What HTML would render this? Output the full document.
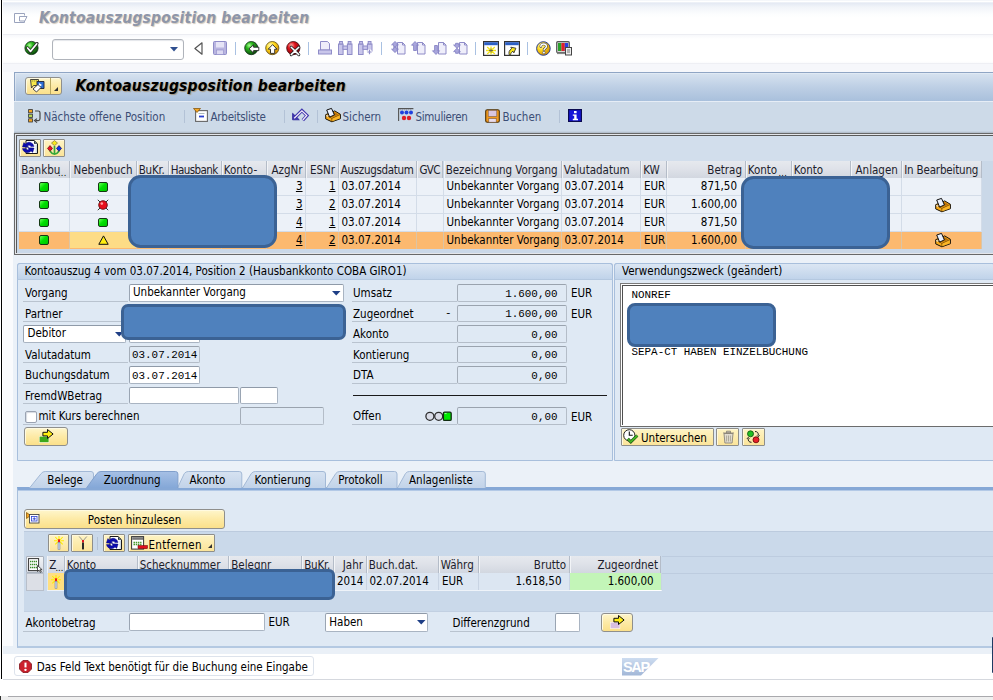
<!DOCTYPE html><html lang="de"><head><meta charset="utf-8"><title>Kontoauszugsposition bearbeiten</title><style>
html,body{margin:0;padding:0}
body{width:993px;height:700px;position:relative;overflow:hidden;background:#fff;font-family:"DejaVu Sans Condensed","Liberation Sans",sans-serif;font-size:11.5px;color:#000}
div{position:absolute;box-sizing:border-box;white-space:nowrap}
svg{position:absolute;overflow:visible}
.t{line-height:14px;height:14px;margin-top:-.7px}
.m{font-family:"Liberation Mono",monospace;font-size:10.9px;line-height:14px}
.fld .m,.ro .m{position:relative;top:.5px}
.fld{background:#fff;border:1px solid #a9b4c2;border-top-color:#8f9aa8;border-left-color:#9aa5b3;border-radius:2px}
.ro{background:#dfe9f4;border:1px solid #b4bdc8;border-top-color:#9aa3ae;border-left-color:#a4adb8;border-radius:2px}
.lbl{border-bottom:1px solid #b9c3cf}
.btn{background:linear-gradient(#fef6cc,#fdeaa6 50%,#fbe08a);border:1px solid #8f8f8c;border-radius:3px;box-shadow:inset 1px 1px 0 #fffae0}
.btn2{background:linear-gradient(#fef4c4,#fbe49a);border:1px solid #8e8e8a;border-radius:1px;box-shadow:inset 1px 1px 0 #fff8dc}
.blue{background:#4f81bd;border:3px solid #3b6294;border-radius:12.5px}
.hd{background:linear-gradient(#eef0f4,#d8dce4);border-right:1px solid #f8f9fb;border-left:1px solid #c2c8d2;top:0}
.c{top:0;height:100%}
.u{text-decoration:underline}
</style></head><body>
<div style="left:0px;top:0px;width:993px;height:700px;background:#fff"></div>
<div style="left:3px;top:0px;width:990px;height:35px;background:linear-gradient(#f0f3f8 0,#fff 1.500px,#e4e9f3 3px,#f1f4f9 7px,#fcfdfe 14px,#fff 18px,#fff 33px)"></div>
<div style="left:3px;top:34px;width:990px;height:1.5px;background:#ecedf2"></div>
<div style="left:3px;top:35px;width:990px;height:28px;background:linear-gradient(#f7f8fb,#fff 4px,#fff 26px,#fafbfd)"></div>
<div style="left:3px;top:63px;width:990px;height:9px;background:linear-gradient(#eeeff4 0,#eeeff4 1.500px,#f6f7fb 1.500px)"></div>
<div style="left:3px;top:72px;width:11px;height:607px;background:#fafbfd"></div>
<div style="left:14px;top:72px;width:979px;height:582px;background:#dfe9f4"></div>
<div style="left:14px;top:72px;width:979px;height:29px;background:linear-gradient(#8fa5c4 0,#8fa5c4 1px,#e0e9f4 1px,#e0e9f4 2px,#d5e1ef 2px,#bccee4 55%,#a9c0dc 100%);border-left:1px solid #8fa5c4"></div>
<div style="left:15px;top:74px;width:1px;height:27px;background:rgba(255,255,255,.35)"></div>
<div style="left:14px;top:101px;width:979px;height:32px;background:linear-gradient(#e6edf6 0,#e6edf6 1px,#cddae8 1px,#cddae8 30px,#b4bfcc 31.500px,#9aa3ad 32px)"></div>
<div style="left:1px;top:0px;width:1px;height:679px;background:#000"></div>
<div style="left:3px;top:654px;width:990px;height:25px;background:#fff"></div>
<div style="left:3px;top:646px;width:990px;height:8px;background:#eaf0f7"></div>
<div style="left:3px;top:679px;width:990px;height:1px;background:#d5d8de"></div>
<div style="left:0px;top:696px;width:993px;height:4px;background:#efefef"></div>
<div style="left:8px;top:696px;width:985px;height:1px;background:#a9a9ad"></div>
<div style="left:0px;top:696px;width:1px;height:4px;background:#333"></div>
<div style="left:991.5px;top:637px;width:1.5px;height:36px;background:#1f3b63;border-radius:2px 0 0 2px;z-index:5"></div>
<div class="t" style="left:39px;top:8.5px;font-size:15.5px;font-weight:bold;font-style:italic;color:#8e96a9;letter-spacing:.2px;line-height:20px;height:20px;text-shadow:1px 1px 1px #d2c8bc">Kontoauszugsposition bearbeiten</div>
<svg style="left:14px;top:13px" width="14" height="11" viewBox="0 0 14 11"><path d="M10.5 2.5V.5H.5v9h10V8" fill="none" stroke="#9aa3bd" stroke-width="1"/><path d="M5.5 3.5h7.5l-2.2 4.5H5.5z" fill="#fff" stroke="#9aa3bd" stroke-width="1"/></svg>
<div style="left:52px;top:39px;width:132px;height:21px;background:#fff;border:1px solid #b0b4bb;border-radius:3px;box-shadow:inset 0 1px 1px #e4e6ea"></div>
<svg style="left:170px;top:47px" width="8" height="5"><path d="M0 0h8L4 4.5z" fill="#2f4f8f"/></svg>
<svg width="0" height="0" style="left:0;top:0"><defs>
<radialGradient id="gG" cx=".35" cy=".3" r=".8"><stop offset="0" stop-color="#b0ff9a"/><stop offset=".3" stop-color="#2cb81e"/><stop offset="1" stop-color="#063a08"/></radialGradient>
<radialGradient id="gY" cx=".35" cy=".3" r=".8"><stop offset="0" stop-color="#fffbc0"/><stop offset=".4" stop-color="#ffd91a"/><stop offset="1" stop-color="#c77a00"/></radialGradient>
<radialGradient id="gR" cx=".35" cy=".3" r=".8"><stop offset="0" stop-color="#ffb0a8"/><stop offset=".35" stop-color="#e0141c"/><stop offset="1" stop-color="#6b0008"/></radialGradient>
</defs></svg>
<svg style="left:24px;top:41px" width="16" height="15" viewBox="0 0 16 15"><circle cx="7.5" cy="7" r="6.600" fill="url(#gG)" stroke="#0b2a10" stroke-width=".8"/><path d="M3.5 7l3 3.6L13 2.6" fill="none" stroke="#222" stroke-width="3.2" stroke-linecap="round" stroke-linejoin="round"/><path d="M3.6 7l2.9 3.4L12.8 2.8" fill="none" stroke="#fff" stroke-width="1.7" stroke-linecap="round" stroke-linejoin="round"/></svg>
<svg style="left:194px;top:42px" width="9" height="13" viewBox="0 0 9 13"><path d="M8 .8v11.4L.9 6.5z" fill="#fff" stroke="#555" stroke-width="1.2" stroke-linejoin="round"/></svg>
<svg style="left:213px;top:41px" width="14" height="14" viewBox="0 0 14 14"><rect x=".5" y=".5" width="13" height="13" rx="1" fill="#b9b5e0" stroke="#8f8cc8"/><rect x="3" y="1" width="8" height="5.5" fill="#e6e4f6"/><rect x="3.5" y="9" width="7" height="4.5" fill="#dcd9f2" stroke="#8f8cc8" stroke-width=".6"/></svg>
<div style="left:235px;top:42px;width:1px;height:13px;background:#a9c1e2"></div>
<svg style="left:244px;top:41px" width="16" height="15" viewBox="0 0 16 15"><circle cx="7.3" cy="7.100" r="6.600" fill="url(#gG)" stroke="#0b2a10" stroke-width=".8"/><path d="M5 7.8l4.6-4v2.4h5.2v3.4H9.6v2.4z" fill="#fff" stroke="#222" stroke-width=".9" stroke-linejoin="round"/></svg>
<svg style="left:265px;top:41px" width="16" height="15" viewBox="0 0 16 15"><circle cx="7.3" cy="7.100" r="6.600" fill="url(#gY)" stroke="#5a4a10" stroke-width=".8"/><path d="M7.6 3.6l4.4 4.6h-2.3v4.2H5.5V8.2H3.2z" fill="#fff" stroke="#222" stroke-width=".9" stroke-linejoin="round"/></svg>
<svg style="left:286px;top:41px" width="16" height="15" viewBox="0 0 16 15"><circle cx="7.3" cy="7.100" r="6.600" fill="url(#gR)" stroke="#3a0508" stroke-width=".8"/><path d="M5.2 6.2l7.6 7.4M12.8 6.2l-7.6 7.4" stroke="#222" stroke-width="3" stroke-linecap="round"/><path d="M5.2 6.2l7.6 7.4M12.8 6.2l-7.6 7.4" stroke="#fff" stroke-width="1.5" stroke-linecap="round"/></svg>
<div style="left:308px;top:42px;width:1px;height:13px;background:#a9c1e2"></div>
<svg style="left:318px;top:41px" width="14" height="14" viewBox="0 0 14 14"><path d="M2.5.5h7l2 2.2V9h-9z" fill="#efeefa" stroke="#8f8cc8"/><rect x=".5" y="9" width="13" height="4" fill="#c9c6ea" stroke="#8f8cc8"/></svg>
<svg style="left:338px;top:41px" width="15" height="14" viewBox="0 0 15 14"><rect x=".5" y="3" width="4.6" height="10.5" fill="#c9c6ea" stroke="#8f8cc8"/><rect x="9.4" y="3" width="4.6" height="10.5" fill="#c9c6ea" stroke="#8f8cc8"/><rect x="1.6" y=".5" width="2.8" height="2.5" fill="#c9c6ea" stroke="#8f8cc8"/><rect x="10.2" y=".5" width="2.8" height="2.5" fill="#c9c6ea" stroke="#8f8cc8"/><rect x="5" y="5" width="4.4" height="3.4" fill="#c9c6ea" stroke="#8f8cc8"/></svg>
<svg style="left:358px;top:41px" width="16" height="14" viewBox="0 0 16 14"><rect x=".5" y="3" width="4.6" height="10.5" fill="#c9c6ea" stroke="#8f8cc8"/><rect x="9.4" y="3" width="4.6" height="7" fill="#c9c6ea" stroke="#8f8cc8"/><rect x="1.6" y=".5" width="2.8" height="2.5" fill="#c9c6ea" stroke="#8f8cc8"/><rect x="10.2" y=".5" width="2.8" height="2.5" fill="#c9c6ea" stroke="#8f8cc8"/><rect x="5" y="5" width="4.4" height="3.4" fill="#c9c6ea" stroke="#8f8cc8"/><path d="M11.5 8.5v5M9 11h5" stroke="#fff" stroke-width="3.2"/><path d="M11.5 8.8v4.4M9.3 11h4.4" stroke="#8f8cc8" stroke-width="1.2"/></svg>
<div style="left:381px;top:42px;width:1px;height:13px;background:#a9c1e2"></div>
<svg style="left:391px;top:41px" width="15" height="14" viewBox="0 0 15 14"><path d="M6.500 1.500h5l2.500 2.500v9h-7.500z" fill="#efeefa" stroke="#8f8cc8"/><path d="M11.500 1.500v2.500h2.500" fill="none" stroke="#8f8cc8"/><path d="M4 .5L.6 3.800h2v1.700h2.800V3.800h2zM4 11.500L.6 8.200h2V6.500h2.800v1.700h2z" fill="#a9a6dc" stroke="#7f7cc2" stroke-width=".8"/></svg>
<svg style="left:411px;top:41px" width="15" height="14" viewBox="0 0 15 14"><path d="M6.500 1.500h5l2.500 2.500v9h-7.500z" fill="#efeefa" stroke="#8f8cc8"/><path d="M11.500 1.500v2.500h2.500" fill="none" stroke="#8f8cc8"/><path d="M4 .5L.5 4.200h2.100v5.300h2.800V4.200h2.100z" fill="#a9a6dc" stroke="#7f7cc2" stroke-width=".8"/></svg>
<svg style="left:432px;top:41px" width="15" height="14" viewBox="0 0 15 14"><path d="M6.500 1.500h5l2.500 2.500v9h-7.500z" fill="#efeefa" stroke="#8f8cc8"/><path d="M11.500 1.500v2.500h2.500" fill="none" stroke="#8f8cc8"/><path d="M4 13.500L.5 9.800h2.100V4.500h2.800v5.300h2.100z" fill="#a9a6dc" stroke="#7f7cc2" stroke-width=".8"/></svg>
<svg style="left:453px;top:41px" width="15" height="14" viewBox="0 0 15 14"><path d="M6.500 1.500h5l2.500 2.500v9h-7.500z" fill="#efeefa" stroke="#8f8cc8"/><path d="M11.500 1.500v2.500h2.500" fill="none" stroke="#8f8cc8"/><path d="M4 7.300L.6 4h2V2.300h2.800V4h2zM4 7.300L.6 10.600h2v1.700h2.800v-1.700h2z" fill="#a9a6dc" stroke="#7f7cc2" stroke-width=".8"/></svg>
<div style="left:475px;top:42px;width:1px;height:13px;background:#a9c1e2"></div>
<svg style="left:483px;top:41px" width="16" height="15" viewBox="0 0 16 15"><rect x=".6" y=".6" width="14.8" height="13.8" fill="#fff" stroke="#333" stroke-width="1.2"/><rect x="1.2" y="1.2" width="13.6" height="3" fill="#2c5fc4"/><path d="M8 5.5v8M3 9.5h10M4.2 6l7.6 7M11.8 6l-7.6 7" stroke="#f2e21a" stroke-width="1.3"/><path d="M8 7.5v4M6 9.5h4" stroke="#555" stroke-width=".8"/></svg>
<svg style="left:504px;top:41px" width="16" height="15" viewBox="0 0 16 15"><rect x=".6" y=".6" width="14.8" height="13.8" fill="#fff" stroke="#333" stroke-width="1.2"/><rect x="1.2" y="1.2" width="13.6" height="3" fill="#2c5fc4"/><path d="M3.5 12.5c.4-3 2-4.6 5-4.8V6l4 3.3-4 3.2v-1.9c-1.6 0-2.9.6-3.6 1.9z" fill="#f7e61c" stroke="#333" stroke-width=".8" stroke-linejoin="round" transform="rotate(-28 8 9.5)"/></svg>
<div style="left:527px;top:42px;width:1px;height:13px;background:#a9c1e2"></div>
<svg style="left:536px;top:41px" width="15" height="15" viewBox="0 0 15 15"><circle cx="7.4" cy="7.5" r="6.8" fill="url(#gY)" stroke="#2c3f90" stroke-width="1"/><path d="M4.8 5.6c0-1.6 1.2-2.6 2.8-2.6s2.8 1 2.8 2.4c0 1.8-2.4 1.8-2.4 3.6" fill="none" stroke="#444" stroke-width="2.6" stroke-linecap="round"/><path d="M4.8 5.6c0-1.6 1.2-2.6 2.8-2.6s2.8 1 2.8 2.4c0 1.8-2.4 1.8-2.4 3.6" fill="none" stroke="#fff" stroke-width="1.4" stroke-linecap="round"/><circle cx="7.9" cy="11.6" r="1.3" fill="#fff" stroke="#444" stroke-width=".6"/></svg>
<svg style="left:556px;top:41px" width="17" height="15" viewBox="0 0 17 15"><rect x=".7" y=".7" width="12.6" height="11" rx="1" fill="#d8d8d8" stroke="#555" stroke-width="1.2"/><rect x="2" y="2" width="3.4" height="8" fill="#2aa02a"/><rect x="5.4" y="2" width="3.4" height="8" fill="#e0202a"/><rect x="8.8" y="2" width="3.4" height="8" fill="#2a40e0"/><rect x="1" y="11.5" width="12" height="1.6" fill="#888"/><rect x="9.5" y="6.5" width="6" height="7.5" fill="#eee" stroke="#444" stroke-width="1"/><path d="M11 9h3M11 11h3" stroke="#666" stroke-width=".9"/></svg>
<div class="btn" style="left:24.5px;top:77px;width:37px;height:17.5px;"></div>
<div style="left:50px;top:78px;width:1px;height:15.5px;background:#b9a860"></div>
<svg style="left:54px;top:87px" width="4" height="4" viewBox="0 0 4 4"><path d="M4 0v4H0z" fill="#333"/></svg>
<svg style="left:28px;top:78px" width="19" height="15" viewBox="0 0 19 15"><path d="M2.5 1.5h8v6h-5l-2 2.5z" fill="#f7e94a" stroke="#333" stroke-width=".9" stroke-linejoin="round"/><path d="M3.8 3h5.5" stroke="#555" stroke-width=".8" stroke-dasharray="1 1"/><path d="M9 3.5h7v7H9z" fill="#2f6fd6" stroke="#223" stroke-width=".9"/><path d="M11 5l3 2-3 2z" fill="#fff"/><path d="M5 11l5-4.5 3 3L8.500 14z" fill="#fff" stroke="#333" stroke-width=".9" stroke-linejoin="round"/></svg>
<div class="t" style="left:75.5px;top:76.5px;font-size:15.5px;font-weight:bold;font-style:italic;color:#000;letter-spacing:.2px;line-height:20px;height:20px;text-shadow:1px 1px 1px rgba(150,110,50,.55)">Kontoauszugsposition bearbeiten</div>
<svg style="left:27.5px;top:109px" width="13" height="14" viewBox="0 0 13 14"><rect x=".6" y=".6" width="3.8" height="3.2" fill="#f5a623" stroke="#333" stroke-width=".8"/><rect x=".6" y="5.2" width="3.8" height="3.2" fill="#b4d455" stroke="#333" stroke-width=".8"/><rect x=".6" y="9.8" width="3.8" height="3.2" fill="#f5a623" stroke="#333" stroke-width=".8"/><path d="M7 2h3.2q1.800 0 1.800 1.800v6q0 1.800-1.800 1.800H7.500" fill="none" stroke="#444" stroke-width="1.2"/><path d="M9 9.600L6.500 11.600 9 13.600" fill="none" stroke="#444" stroke-width="1.200"/></svg>
<div class="t" style="left:43.5px;top:110.3px;color:#3c4e76">Nächste offene Position</div>
<div style="left:184px;top:109.5px;width:1px;height:13px;background:#b3c2d6"></div>
<svg style="left:193px;top:108px" width="15" height="14" viewBox="0 0 15 14"><rect x="2.600" y="2.600" width="11.800" height="10.800" fill="#fff" stroke="#666" stroke-width="1.100"/><path d="M.5.500h7L4 4.500z" fill="#f5a623" stroke="#7a4a00" stroke-width=".7"/><path d="M6 8.500h5" stroke="#2a3fd0" stroke-width="1.800"/><path d="M5.500 5.500h6" stroke="#9aa" stroke-width=".8"/></svg>
<div class="t" style="left:210.5px;top:110.3px;color:#3c4e76;letter-spacing:-.25px">Arbeitsliste</div>
<div style="left:284px;top:109.5px;width:1px;height:13px;background:#b3c2d6"></div>
<svg style="left:291.5px;top:109px" width="17" height="13" viewBox="0 0 17 13"><path d="M3.500 8L9.900 1.600 15 6.500 10.800 11.200" fill="none" stroke="#4238ae" stroke-width="3.200" stroke-linejoin="miter"/><path d="M.6 4.300v6.500h6.700z" fill="#4238ae" stroke="#2a209a" stroke-width=".8" stroke-linejoin="round"/><path d="M2.200 9.300L9.900 1.800 14.800 6.500 10.800 11" fill="none" stroke="#f6eefa" stroke-width="1.200"/></svg>
<div style="left:316.5px;top:109.5px;width:1px;height:13px;background:#b3c2d6"></div>
<svg style="left:324.8px;top:108px" width="16" height="14" viewBox="0 0 16 14"><path d="M.7 6.700L9.700 2.900l5.700 3.400v4.400L6.900 13.800.7 10.900z" fill="#f7a91a" stroke="#17120a" stroke-width="1" stroke-linejoin="round"/><path d="M2.600 6.800L9.600 4l3.900 2.400-6.500 2.900z" fill="#b86f06"/><path d="M.9 6.900l6 3.500 8.300-3.900M6.900 10.400v3.200" fill="none" stroke="#6a4204" stroke-width=".8"/><path d="M7.300 10.800l7.700-3.600v3.200l-7.700 3z" fill="#ffc030" opacity=".55"/><path d="M1.700 2L6.500 .4l2.900 6.500L4.600 9.100z" fill="#e9f0fc" stroke="#111" stroke-width="1" stroke-linejoin="round"/><path d="M3.200 8.300L1.300 7.500" stroke="#fff" stroke-width="1.200"/></svg>
<div class="t" style="left:342.5px;top:110.3px;color:#3c4e76">Sichern</div>
<svg style="left:398px;top:108px" width="16" height="14" viewBox="0 0 16 14"><path d="M.6 13V.6h14.800" fill="none" stroke="#555" stroke-width="1.100"/><circle cx="4" cy="4.500" r="2" fill="#2040e0"/><circle cx="8.500" cy="4.500" r="2" fill="#2040e0"/><circle cx="13" cy="4.500" r="2" fill="#2040e0"/><circle cx="6" cy="10" r="2.200" fill="#e0202a"/><circle cx="11" cy="10" r="2.200" fill="#e0202a"/><path d="M2 1.800h12" stroke="#889" stroke-width=".7" stroke-dasharray="1 1"/></svg>
<div class="t" style="left:415.5px;top:110.3px;color:#3c4e76;letter-spacing:-.3px">Simulieren</div>
<svg style="left:485px;top:108.5px" width="15" height="14" viewBox="0 0 15 14"><rect x=".7" y=".7" width="13.600" height="12.600" rx="1.500" fill="#f29a1c" stroke="#4a3008" stroke-width="1.100"/><rect x="3.200" y="1.300" width="8.600" height="6.200" fill="#d9c6de" stroke="#7a5a40" stroke-width=".6"/><rect x="3.800" y="9.600" width="7.400" height="3.600" fill="#e9dcec" stroke="#7a5a40" stroke-width=".6"/></svg>
<div class="t" style="left:502.5px;top:110.3px;color:#3c4e76">Buchen</div>
<div style="left:559px;top:109.5px;width:1px;height:13px;background:#b3c2d6"></div>
<svg style="left:568px;top:108.5px" width="14" height="13" viewBox="0 0 14 13"><rect x=".6" y=".6" width="12.800" height="11.800" fill="#1616d8" stroke="#0a0a50" stroke-width="1.200"/><rect x="6" y="2" width="2.600" height="2.200" fill="#fff"/><path d="M4.800 5.400h3.800v4.400h1.400v1.400H4.800V9.800h1.400V6.800H4.800z" fill="#fff"/></svg>
<div style="left:13px;top:133px;width:980px;height:513px;background:#ebf1f8"></div>
<div style="left:14px;top:133px;width:981px;height:122px;background:#cad8e8;border:1px solid #686868;border-right:none"></div>
<div style="left:15px;top:134px;width:980px;height:120px;border:1px solid #e4e6ea;border-right:none"></div>
<div style="left:16px;top:135px;width:979px;height:118px;border-top:1px solid #5a5a5a;border-left:1px solid #5a5a5a"></div>
<div style="left:17px;top:136px;width:978px;height:24.5px;background:#d2deec"></div>
<div class="btn2" style="left:19.3px;top:138.8px;width:21.5px;height:18px;"></div>
<div class="btn2" style="left:43.2px;top:138.8px;width:22.3px;height:18px;"></div>
<svg style="left:22px;top:140.2px" width="16" height="14" viewBox="0 0 16 14"><path d="M4 .5h8l3.500 3.300v9.700H4z" fill="#fff" stroke="#1a1a1a" stroke-width="1"/><path d="M12 .5v3.300h3.500z" fill="#222"/><path d="M12.500 1.800l1.800 1.600" stroke="#7ad" stroke-width=".8"/><path d="M14.200 4.500v8.500" stroke="#bcd" stroke-width="1"/><path d="M.4 6.900L1.800 2.600 3.500 3.900C5 2.300 7.200 1.900 9 2.700c1.700.7 2.800 2.100 3 3.900H8.900C8.600 5.700 7.900 5.200 7 5.200c-.7 0-1.300.3-1.700.8l1.600 1.300z" fill="#0c0cae" stroke="#00006a" stroke-width=".4"/><path d="M12.100 8.100L10.700 12.400 9 11.100C7.500 12.700 5.300 13.100 3.500 12.300 1.800 11.600.7 10.200.5 8.400H3.600C3.900 9.300 4.600 9.800 5.500 9.800c.7 0 1.300-.3 1.700-.8L5.600 7.700z" fill="#0c0cae" stroke="#00006a" stroke-width=".4"/></svg>
<svg style="left:46.5px;top:139.7px" width="16" height="15" viewBox="0 0 16 15"><path d="M7.500 14V6M7.500 14.200C5 14.200 4 12.500 3 11M7.500 14.200C10 14.200 11 12.500 12 11" fill="none" stroke="#35a83a" stroke-width="1.700"/><path d="M7.500 .5l3 2.600-3 2.600-3-2.600z" fill="#f7ea1c" stroke="#7a7040" stroke-width=".7"/><path d="M3 5.600l2.500 2.800L3 11.300.5 8.400z" fill="#ee1020" stroke="#5a0a10" stroke-width=".7"/><path d="M12 5.600l2.500 2.800-2.500 2.900-2.500-2.900z" fill="#1030e8" stroke="#0a0a5a" stroke-width=".7"/></svg>
<div style="left:19px;top:160.5px;width:50.5px;height:17.5px;background:linear-gradient(#e6e9ee,#dfe2e9 45%,#d2d7e0);border-left:1px solid #f2f4f7;border-right:1px solid #b4bcc8;line-height:18.5px;color:#1d1d2c;overflow:hidden;padding-left:1.200px;">Bankbu</div>
<div style="left:69.5px;top:160.5px;width:67.0px;height:17.5px;background:linear-gradient(#e6e9ee,#dfe2e9 45%,#d2d7e0);border-left:1px solid #f2f4f7;border-right:1px solid #b4bcc8;line-height:18.5px;color:#1d1d2c;overflow:hidden;text-align:center;">Nebenbuch</div>
<div style="left:136.5px;top:160.5px;width:32.0px;height:17.5px;background:linear-gradient(#e6e9ee,#dfe2e9 45%,#d2d7e0);border-left:1px solid #f2f4f7;border-right:1px solid #b4bcc8;line-height:18.5px;color:#1d1d2c;overflow:hidden;letter-spacing:-0.18px;padding-left:1.200px;">BuKr.</div>
<div style="left:168.5px;top:160.5px;width:53.0px;height:17.5px;background:linear-gradient(#e6e9ee,#dfe2e9 45%,#d2d7e0);border-left:1px solid #f2f4f7;border-right:1px solid #b4bcc8;line-height:18.5px;color:#1d1d2c;overflow:hidden;letter-spacing:-0.57px;padding-left:1.200px;">Hausbank</div>
<div style="left:221.5px;top:160.5px;width:45.5px;height:17.5px;background:linear-gradient(#e6e9ee,#dfe2e9 45%,#d2d7e0);border-left:1px solid #f2f4f7;border-right:1px solid #b4bcc8;line-height:18.5px;color:#1d1d2c;overflow:hidden;padding-left:1.200px;">Konto-</div>
<div style="left:267px;top:160.5px;width:39px;height:17.5px;background:linear-gradient(#e6e9ee,#dfe2e9 45%,#d2d7e0);border-left:1px solid #f2f4f7;border-right:1px solid #b4bcc8;line-height:18.5px;color:#1d1d2c;overflow:hidden;text-align:right;padding-right:2.500px;">AzgNr</div>
<div style="left:306px;top:160.5px;width:32.5px;height:17.5px;background:linear-gradient(#e6e9ee,#dfe2e9 45%,#d2d7e0);border-left:1px solid #f2f4f7;border-right:1px solid #b4bcc8;line-height:18.5px;color:#1d1d2c;overflow:hidden;text-align:right;padding-right:2.500px;">ESNr</div>
<div style="left:338.5px;top:160.5px;width:78.80000000000001px;height:17.5px;background:linear-gradient(#e6e9ee,#dfe2e9 45%,#d2d7e0);border-left:1px solid #f2f4f7;border-right:1px solid #b4bcc8;line-height:18.5px;color:#1d1d2c;overflow:hidden;letter-spacing:-0.31px;padding-left:1.200px;">Auszugsdatum</div>
<div style="left:417.3px;top:160.5px;width:26.19999999999999px;height:17.5px;background:linear-gradient(#e6e9ee,#dfe2e9 45%,#d2d7e0);border-left:1px solid #f2f4f7;border-right:1px solid #b4bcc8;line-height:18.5px;color:#1d1d2c;overflow:hidden;letter-spacing:-0.71px;padding-left:1.200px;">GVC</div>
<div style="left:443.5px;top:160.5px;width:118.0px;height:17.5px;background:linear-gradient(#e6e9ee,#dfe2e9 45%,#d2d7e0);border-left:1px solid #f2f4f7;border-right:1px solid #b4bcc8;line-height:18.5px;color:#1d1d2c;overflow:hidden;letter-spacing:-0.03px;padding-left:1.200px;">Bezeichnung Vorgang</div>
<div style="left:561.5px;top:160.5px;width:79.5px;height:17.5px;background:linear-gradient(#e6e9ee,#dfe2e9 45%,#d2d7e0);border-left:1px solid #f2f4f7;border-right:1px solid #b4bcc8;line-height:18.5px;color:#1d1d2c;overflow:hidden;padding-left:1.200px;">Valutadatum</div>
<div style="left:641px;top:160.5px;width:26px;height:17.5px;background:linear-gradient(#e6e9ee,#dfe2e9 45%,#d2d7e0);border-left:1px solid #f2f4f7;border-right:1px solid #b4bcc8;line-height:18.5px;color:#1d1d2c;overflow:hidden;padding-left:1.200px;">KW</div>
<div style="left:667px;top:160.5px;width:78.5px;height:17.5px;background:linear-gradient(#e6e9ee,#dfe2e9 45%,#d2d7e0);border-left:1px solid #f2f4f7;border-right:1px solid #b4bcc8;line-height:18.5px;color:#1d1d2c;overflow:hidden;text-align:right;padding-right:2.500px;">Betrag</div>
<div style="left:745.5px;top:160.5px;width:46.0px;height:17.5px;background:linear-gradient(#e6e9ee,#dfe2e9 45%,#d2d7e0);border-left:1px solid #f2f4f7;border-right:1px solid #b4bcc8;line-height:18.5px;color:#1d1d2c;overflow:hidden;padding-left:1.200px;">Konto</div>
<div style="left:791.5px;top:160.5px;width:59.5px;height:17.5px;background:linear-gradient(#e6e9ee,#dfe2e9 45%,#d2d7e0);border-left:1px solid #f2f4f7;border-right:1px solid #b4bcc8;line-height:18.5px;color:#1d1d2c;overflow:hidden;padding-left:1.200px;">Konto</div>
<div style="left:851px;top:160.5px;width:51px;height:17.5px;background:linear-gradient(#e6e9ee,#dfe2e9 45%,#d2d7e0);border-left:1px solid #f2f4f7;border-right:1px solid #b4bcc8;line-height:18.5px;color:#1d1d2c;overflow:hidden;padding-left:3.500px;">Anlagen</div>
<div style="left:902px;top:160.5px;width:80px;height:17.5px;background:linear-gradient(#e6e9ee,#dfe2e9 45%,#d2d7e0);border-left:1px solid #f2f4f7;border-right:1px solid #b4bcc8;line-height:18.5px;color:#1d1d2c;overflow:hidden;letter-spacing:-0.18px;padding-left:1.200px;">In Bearbeitung</div>
<div class="t" style="left:58px;top:166.3px;font-size:9px;letter-spacing:.3px">...</div>
<div class="t" style="left:778.5px;top:166.3px;font-size:9px;letter-spacing:.3px">...</div>
<div style="left:19px;top:178.2px;width:963px;height:18.100000000000023px;background:#ecf1f8;border-bottom:1px solid #d3dce8"></div>
<div style="left:68.5px;top:178.2px;width:1px;height:18.100000000000023px;background:#d3dce8"></div>
<div style="left:135.5px;top:178.2px;width:1px;height:18.100000000000023px;background:#d3dce8"></div>
<div style="left:167.5px;top:178.2px;width:1px;height:18.100000000000023px;background:#d3dce8"></div>
<div style="left:220.5px;top:178.2px;width:1px;height:18.100000000000023px;background:#d3dce8"></div>
<div style="left:266px;top:178.2px;width:1px;height:18.100000000000023px;background:#d3dce8"></div>
<div style="left:305px;top:178.2px;width:1px;height:18.100000000000023px;background:#d3dce8"></div>
<div style="left:337.5px;top:178.2px;width:1px;height:18.100000000000023px;background:#d3dce8"></div>
<div style="left:416.3px;top:178.2px;width:1px;height:18.100000000000023px;background:#d3dce8"></div>
<div style="left:442.5px;top:178.2px;width:1px;height:18.100000000000023px;background:#d3dce8"></div>
<div style="left:560.5px;top:178.2px;width:1px;height:18.100000000000023px;background:#d3dce8"></div>
<div style="left:640px;top:178.2px;width:1px;height:18.100000000000023px;background:#d3dce8"></div>
<div style="left:666px;top:178.2px;width:1px;height:18.100000000000023px;background:#d3dce8"></div>
<div style="left:744.5px;top:178.2px;width:1px;height:18.100000000000023px;background:#d3dce8"></div>
<div style="left:790.5px;top:178.2px;width:1px;height:18.100000000000023px;background:#d3dce8"></div>
<div style="left:850px;top:178.2px;width:1px;height:18.100000000000023px;background:#d3dce8"></div>
<div style="left:901px;top:178.2px;width:1px;height:18.100000000000023px;background:#d3dce8"></div>
<div style="left:981px;top:178.2px;width:1px;height:18.100000000000023px;background:#d3dce8"></div>
<div style="left:39px;top:182.05px;width:10px;height:9.5px;background:linear-gradient(135deg,#6dff5a,#00e000 45%,#00c400);border:1.3px solid #143814;border-radius:2px"></div>
<div style="left:98px;top:182.05px;width:10px;height:9.5px;background:linear-gradient(135deg,#6dff5a,#00e000 45%,#00c400);border:1.3px solid #143814;border-radius:2px"></div>
<div class="t" style="left:267px;top:179.5px;width:35.5px;text-align:right"><span class="u">3</span></div>
<div class="t" style="left:306px;top:179.5px;width:29.500px;text-align:right"><span class="u">1</span></div>
<div class="t" style="left:341.5px;top:179.5px;">03.07.2014</div>
<div class="t" style="left:446.5px;top:179.5px;">Unbekannter Vorgang</div>
<div class="t" style="left:564.5px;top:179.5px;">03.07.2014</div>
<div class="t" style="left:644px;top:179.5px;">EUR</div>
<div class="t" style="left:667px;top:179.5px;width:70px;text-align:right">871,50</div>
<div style="left:19px;top:196.3px;width:963px;height:17.599999999999994px;background:#ecf1f8;border-bottom:1px solid #d3dce8"></div>
<div style="left:68.5px;top:196.3px;width:1px;height:17.599999999999994px;background:#d3dce8"></div>
<div style="left:135.5px;top:196.3px;width:1px;height:17.599999999999994px;background:#d3dce8"></div>
<div style="left:167.5px;top:196.3px;width:1px;height:17.599999999999994px;background:#d3dce8"></div>
<div style="left:220.5px;top:196.3px;width:1px;height:17.599999999999994px;background:#d3dce8"></div>
<div style="left:266px;top:196.3px;width:1px;height:17.599999999999994px;background:#d3dce8"></div>
<div style="left:305px;top:196.3px;width:1px;height:17.599999999999994px;background:#d3dce8"></div>
<div style="left:337.5px;top:196.3px;width:1px;height:17.599999999999994px;background:#d3dce8"></div>
<div style="left:416.3px;top:196.3px;width:1px;height:17.599999999999994px;background:#d3dce8"></div>
<div style="left:442.5px;top:196.3px;width:1px;height:17.599999999999994px;background:#d3dce8"></div>
<div style="left:560.5px;top:196.3px;width:1px;height:17.599999999999994px;background:#d3dce8"></div>
<div style="left:640px;top:196.3px;width:1px;height:17.599999999999994px;background:#d3dce8"></div>
<div style="left:666px;top:196.3px;width:1px;height:17.599999999999994px;background:#d3dce8"></div>
<div style="left:744.5px;top:196.3px;width:1px;height:17.599999999999994px;background:#d3dce8"></div>
<div style="left:790.5px;top:196.3px;width:1px;height:17.599999999999994px;background:#d3dce8"></div>
<div style="left:850px;top:196.3px;width:1px;height:17.599999999999994px;background:#d3dce8"></div>
<div style="left:901px;top:196.3px;width:1px;height:17.599999999999994px;background:#d3dce8"></div>
<div style="left:981px;top:196.3px;width:1px;height:17.599999999999994px;background:#d3dce8"></div>
<div style="left:39px;top:199.90000000000003px;width:10px;height:9.5px;background:linear-gradient(135deg,#6dff5a,#00e000 45%,#00c400);border:1.3px solid #143814;border-radius:2px"></div>
<svg style="left:97px;top:199.3px" width="12" height="12" viewBox="0 0 12 12"><path d="M.8.800l10.400 10.400M11.200.800L.8 11.200" stroke="#333" stroke-width="1"/><circle cx="6" cy="6" r="4.300" fill="#e8101c" stroke="#500" stroke-width=".8"/><circle cx="4.800" cy="4.600" r="1.300" fill="#ff9c9c"/></svg>
<div class="t" style="left:267px;top:197.60000000000002px;width:35.5px;text-align:right"><span class="u">3</span></div>
<div class="t" style="left:306px;top:197.60000000000002px;width:29.500px;text-align:right"><span class="u">2</span></div>
<div class="t" style="left:341.5px;top:197.60000000000002px;">03.07.2014</div>
<div class="t" style="left:446.5px;top:197.60000000000002px;">Unbekannter Vorgang</div>
<div class="t" style="left:564.5px;top:197.60000000000002px;">03.07.2014</div>
<div class="t" style="left:644px;top:197.60000000000002px;">EUR</div>
<div class="t" style="left:667px;top:197.60000000000002px;width:70px;text-align:right">1.600,00</div>
<svg style="left:934.5px;top:197.60000000000002px" width="16" height="14" viewBox="0 0 16 14"><path d="M.7 6.700L9.700 2.900l5.700 3.400v4.400L6.900 13.800.7 10.900z" fill="#f7a91a" stroke="#17120a" stroke-width="1" stroke-linejoin="round"/><path d="M2.600 6.800L9.600 4l3.900 2.400-6.500 2.900z" fill="#b86f06"/><path d="M.9 6.900l6 3.500 8.300-3.900M6.900 10.400v3.200" fill="none" stroke="#6a4204" stroke-width=".8"/><path d="M7.300 10.800l7.700-3.600v3.200l-7.700 3z" fill="#ffc030" opacity=".55"/><path d="M1.700 2L6.500 .4l2.900 6.500L4.600 9.100z" fill="#e9f0fc" stroke="#111" stroke-width="1" stroke-linejoin="round"/><path d="M3.200 8.300L1.300 7.500" stroke="#fff" stroke-width="1.200"/></svg>
<div style="left:19px;top:213.9px;width:963px;height:18.099999999999994px;background:#ecf1f8;border-bottom:1px solid #d3dce8"></div>
<div style="left:68.5px;top:213.9px;width:1px;height:18.099999999999994px;background:#d3dce8"></div>
<div style="left:135.5px;top:213.9px;width:1px;height:18.099999999999994px;background:#d3dce8"></div>
<div style="left:167.5px;top:213.9px;width:1px;height:18.099999999999994px;background:#d3dce8"></div>
<div style="left:220.5px;top:213.9px;width:1px;height:18.099999999999994px;background:#d3dce8"></div>
<div style="left:266px;top:213.9px;width:1px;height:18.099999999999994px;background:#d3dce8"></div>
<div style="left:305px;top:213.9px;width:1px;height:18.099999999999994px;background:#d3dce8"></div>
<div style="left:337.5px;top:213.9px;width:1px;height:18.099999999999994px;background:#d3dce8"></div>
<div style="left:416.3px;top:213.9px;width:1px;height:18.099999999999994px;background:#d3dce8"></div>
<div style="left:442.5px;top:213.9px;width:1px;height:18.099999999999994px;background:#d3dce8"></div>
<div style="left:560.5px;top:213.9px;width:1px;height:18.099999999999994px;background:#d3dce8"></div>
<div style="left:640px;top:213.9px;width:1px;height:18.099999999999994px;background:#d3dce8"></div>
<div style="left:666px;top:213.9px;width:1px;height:18.099999999999994px;background:#d3dce8"></div>
<div style="left:744.5px;top:213.9px;width:1px;height:18.099999999999994px;background:#d3dce8"></div>
<div style="left:790.5px;top:213.9px;width:1px;height:18.099999999999994px;background:#d3dce8"></div>
<div style="left:850px;top:213.9px;width:1px;height:18.099999999999994px;background:#d3dce8"></div>
<div style="left:901px;top:213.9px;width:1px;height:18.099999999999994px;background:#d3dce8"></div>
<div style="left:981px;top:213.9px;width:1px;height:18.099999999999994px;background:#d3dce8"></div>
<div style="left:39px;top:217.75px;width:10px;height:9.5px;background:linear-gradient(135deg,#6dff5a,#00e000 45%,#00c400);border:1.3px solid #143814;border-radius:2px"></div>
<div style="left:98px;top:217.75px;width:10px;height:9.5px;background:linear-gradient(135deg,#6dff5a,#00e000 45%,#00c400);border:1.3px solid #143814;border-radius:2px"></div>
<div class="t" style="left:267px;top:215.20000000000002px;width:35.5px;text-align:right"><span class="u">4</span></div>
<div class="t" style="left:306px;top:215.20000000000002px;width:29.500px;text-align:right"><span class="u">1</span></div>
<div class="t" style="left:341.5px;top:215.20000000000002px;">03.07.2014</div>
<div class="t" style="left:446.5px;top:215.20000000000002px;">Unbekannter Vorgang</div>
<div class="t" style="left:564.5px;top:215.20000000000002px;">03.07.2014</div>
<div class="t" style="left:644px;top:215.20000000000002px;">EUR</div>
<div class="t" style="left:667px;top:215.20000000000002px;width:70px;text-align:right">871,50</div>
<div style="left:19px;top:232px;width:963px;height:16.80000000000001px;background:#fcb96f;border-bottom:1px solid #fcb96f"></div>
<div style="left:70px;top:232px;width:66.5px;height:16.30000000000001px;background:#fddc86"></div>
<div style="left:68.5px;top:232px;width:1px;height:16.80000000000001px;background:#dcc4a4"></div>
<div style="left:135.5px;top:232px;width:1px;height:16.80000000000001px;background:#dcc4a4"></div>
<div style="left:167.5px;top:232px;width:1px;height:16.80000000000001px;background:#dcc4a4"></div>
<div style="left:220.5px;top:232px;width:1px;height:16.80000000000001px;background:#dcc4a4"></div>
<div style="left:266px;top:232px;width:1px;height:16.80000000000001px;background:#dcc4a4"></div>
<div style="left:305px;top:232px;width:1px;height:16.80000000000001px;background:#dcc4a4"></div>
<div style="left:337.5px;top:232px;width:1px;height:16.80000000000001px;background:#dcc4a4"></div>
<div style="left:416.3px;top:232px;width:1px;height:16.80000000000001px;background:#dcc4a4"></div>
<div style="left:442.5px;top:232px;width:1px;height:16.80000000000001px;background:#dcc4a4"></div>
<div style="left:560.5px;top:232px;width:1px;height:16.80000000000001px;background:#dcc4a4"></div>
<div style="left:640px;top:232px;width:1px;height:16.80000000000001px;background:#dcc4a4"></div>
<div style="left:666px;top:232px;width:1px;height:16.80000000000001px;background:#dcc4a4"></div>
<div style="left:744.5px;top:232px;width:1px;height:16.80000000000001px;background:#dcc4a4"></div>
<div style="left:790.5px;top:232px;width:1px;height:16.80000000000001px;background:#dcc4a4"></div>
<div style="left:850px;top:232px;width:1px;height:16.80000000000001px;background:#dcc4a4"></div>
<div style="left:901px;top:232px;width:1px;height:16.80000000000001px;background:#dcc4a4"></div>
<div style="left:981px;top:232px;width:1px;height:16.80000000000001px;background:#dcc4a4"></div>
<div style="left:39px;top:235.20000000000002px;width:10px;height:9.5px;background:linear-gradient(135deg,#6dff5a,#00e000 45%,#00c400);border:1.3px solid #143814;border-radius:2px"></div>
<svg style="left:97.5px;top:235px" width="11" height="10" viewBox="0 0 11 10"><path d="M5.500.900L10.200 9.300H.8z" fill="#ffee10" stroke="#111" stroke-width="1" stroke-linejoin="round"/></svg>
<div class="t" style="left:267px;top:233.3px;width:35.5px;text-align:right"><span class="u">4</span></div>
<div class="t" style="left:306px;top:233.3px;width:29.500px;text-align:right"><span class="u">2</span></div>
<div class="t" style="left:341.5px;top:233.3px;">03.07.2014</div>
<div class="t" style="left:446.5px;top:233.3px;">Unbekannter Vorgang</div>
<div class="t" style="left:564.5px;top:233.3px;">03.07.2014</div>
<div class="t" style="left:644px;top:233.3px;">EUR</div>
<div class="t" style="left:667px;top:233.3px;width:70px;text-align:right">1.600,00</div>
<svg style="left:934.5px;top:233.3px" width="16" height="14" viewBox="0 0 16 14"><path d="M.7 6.700L9.700 2.900l5.700 3.400v4.400L6.900 13.800.7 10.900z" fill="#f7a91a" stroke="#17120a" stroke-width="1" stroke-linejoin="round"/><path d="M2.600 6.800L9.600 4l3.900 2.400-6.500 2.900z" fill="#b86f06"/><path d="M.9 6.900l6 3.500 8.300-3.900M6.900 10.400v3.200" fill="none" stroke="#6a4204" stroke-width=".8"/><path d="M7.300 10.800l7.700-3.600v3.200l-7.700 3z" fill="#ffc030" opacity=".55"/><path d="M1.700 2L6.500 .4l2.900 6.500L4.600 9.100z" fill="#e9f0fc" stroke="#111" stroke-width="1" stroke-linejoin="round"/><path d="M3.200 8.300L1.300 7.500" stroke="#fff" stroke-width="1.200"/></svg>
<div style="left:17px;top:263px;width:596px;height:198px;background:#dfe9f4;border:1px solid #a8bfdc;border-radius:3px 3px 0 0"></div>
<div style="left:17px;top:263px;width:596px;height:17px;background:linear-gradient(#dbe6f3,#c0d3ea);border:1px solid #a8bfdc;border-bottom-color:#b4c8e0;border-radius:3px 3px 0 0"></div>
<div class="t" style="left:24.5px;top:264.5px;">Kontoauszug 4 vom 03.07.2014, Position 2 (Hausbankkonto COBA GIRO1)</div>
<div style="left:614.3px;top:263px;width:381px;height:198px;background:#dfe9f4;border:1px solid #a8bfdc;border-radius:3px 3px 0 0"></div>
<div style="left:614.3px;top:263px;width:381px;height:17px;background:linear-gradient(#dbe6f3,#c0d3ea);border:1px solid #a8bfdc;border-bottom-color:#b4c8e0;border-radius:3px 3px 0 0"></div>
<div class="t" style="left:622px;top:264.5px;">Verwendungszweck (geändert)</div>
<div class="lbl" style="left:23px;top:284.2px;width:105px;height:17.700px;line-height:19.200px;padding-left:2px">Vorgang</div>
<div class="fld" style="left:128.5px;top:284.2px;width:215.5px;height:17.5px;line-height:15.8px;padding-left:3.500px">Unbekannter Vorgang</div>
<svg style="left:332px;top:290.5px" width="9" height="5" viewBox="0 0 9 5"><path d="M0 0h8.500L4.250 4.500z" fill="#1f3f86"/></svg>
<div class="lbl" style="left:23px;top:304.72px;width:105px;height:17.700px;line-height:19.200px;padding-left:2px">Partner</div>
<div class="fld" style="left:23px;top:325.24px;width:103px;height:17.5px;line-height:15.8px;padding-left:3.500px">Debitor</div>
<svg style="left:115px;top:331.5px" width="9" height="5" viewBox="0 0 9 5"><path d="M0 0h8.500L4.250 4.500z" fill="#1f3f86"/></svg>
<div class="fld" style="left:128.5px;top:325.24px;width:71px;height:17.5px;line-height:15.8px;"></div>
<div class="lbl" style="left:23px;top:345.76px;width:105px;height:17.700px;line-height:19.200px;padding-left:2px">Valutadatum</div>
<div class="ro" style="left:128.5px;top:345.76px;width:71px;height:17.5px;line-height:15.8px;padding-left:2.500px"><span class="m">03.07.2014</span></div>
<div class="lbl" style="left:23px;top:366.28px;width:105px;height:17.700px;line-height:19.200px;padding-left:2px">Buchungsdatum</div>
<div class="fld" style="left:128.5px;top:366.28px;width:71px;height:17.5px;line-height:15.8px;padding-left:2.500px"><span class="m">03.07.2014</span></div>
<div class="lbl" style="left:23px;top:386.8px;width:105px;height:17.700px;line-height:19.200px;padding-left:2px">FremdWBetrag</div>
<div class="fld" style="left:128.5px;top:386.8px;width:110px;height:17.5px;line-height:15.8px;"></div>
<div class="fld" style="left:240px;top:386.8px;width:38px;height:17.5px;line-height:15.8px;"></div>
<div class="lbl" style="left:23px;top:407.32px;width:217px;height:17.7px;"></div>
<div style="left:24.5px;top:411.21999999999997px;width:12px;height:12px;background:#fff;border:1px solid #9aa3b2;border-radius:2px;box-shadow:inset 1px 1px 1px #d5dae2"></div>
<div class="t" style="left:38.5px;top:409.92px;">mit Kurs berechnen</div>
<div class="ro" style="left:240px;top:407.32px;width:84px;height:17.5px;line-height:15.8px;"></div>
<div class="btn" style="left:23.7px;top:427.3px;width:44.7px;height:19.2px;"></div>
<svg style="left:38.5px;top:429.3px" width="15" height="14" viewBox="0 0 15 14"><rect x="0" y="7" width="10.200" height="6.800" fill="#fffbe8"/><rect x=".6" y="7.600" width="9" height="5.600" fill="#3ca81c"/><path d="M3.900 3.300h4.600V.5l5.600 4.500-5.600 4.500V6.900H3.900z" fill="#ffee10" stroke="#111" stroke-width="1" stroke-linejoin="round"/></svg>
<div class="lbl" style="left:352px;top:284.2px;width:104.5px;height:17.700px;line-height:19.200px;padding-left:1px">Umsatz</div>
<div class="ro" style="left:456.5px;top:284.2px;width:110.5px;height:17.5px;line-height:15.8px;text-align:right;padding-right:8.500px"><span class="m">1.600,00</span></div>
<div class="t" style="left:571px;top:287.09999999999997px;">EUR</div>
<div class="lbl" style="left:352px;top:304.72px;width:104.5px;height:17.700px;line-height:19.200px;padding-left:1px">Zugeordnet</div>
<div class="ro" style="left:456.5px;top:304.72px;width:110.5px;height:17.5px;line-height:15.8px;text-align:right;padding-right:8.500px"><span class="m">1.600,00</span></div>
<div class="t" style="left:571px;top:307.62px;">EUR</div>
<div class="t m" style="left:445px;top:306.72px;">-</div>
<div class="lbl" style="left:352px;top:325.24px;width:104.5px;height:17.700px;line-height:19.200px;padding-left:1px">Akonto</div>
<div class="ro" style="left:456.5px;top:325.24px;width:110.5px;height:17.5px;line-height:15.8px;text-align:right;padding-right:8.500px"><span class="m">0,00</span></div>
<div class="lbl" style="left:352px;top:345.76px;width:104.5px;height:17.700px;line-height:19.200px;padding-left:1px">Kontierung</div>
<div class="ro" style="left:456.5px;top:345.76px;width:110.5px;height:17.5px;line-height:15.8px;text-align:right;padding-right:8.500px"><span class="m">0,00</span></div>
<div class="lbl" style="left:352px;top:366.28px;width:104.5px;height:17.700px;line-height:19.200px;padding-left:1px">DTA</div>
<div class="ro" style="left:456.5px;top:366.28px;width:110.5px;height:17.5px;line-height:15.8px;text-align:right;padding-right:8.500px"><span class="m">0,00</span></div>
<div style="left:352.5px;top:394.7px;width:254.5px;height:1px;background:#1a1a1a"></div>
<div class="lbl" style="left:352px;top:407.32px;width:104.5px;height:17.700px;line-height:19.200px;padding-left:1px">Offen</div>
<div class="ro" style="left:456.5px;top:407.32px;width:110.5px;height:17.5px;line-height:15.8px;text-align:right;padding-right:8.500px"><span class="m">0,00</span></div>
<div class="t" style="left:571px;top:410.21999999999997px;">EUR</div>
<svg style="left:425px;top:411px" width="28" height="11" viewBox="0 0 28 11"><circle cx="4.900" cy="5.300" r="4" fill="#d9dce7" stroke="#2e2e2e" stroke-width="1.300"/><circle cx="13.700" cy="5.300" r="4" fill="#d9dce7" stroke="#2e2e2e" stroke-width="1.300"/><rect x="18.400" y="1.200" width="7.800" height="8.200" rx="1.200" fill="#00e800" stroke="#102c10" stroke-width="1.300"/><path d="M19.600 2.600h2" stroke="#9dff9d" stroke-width="1"/></svg>
<div style="left:620px;top:282.7px;width:375px;height:144px;background:#fff;border:1px solid #7a7a7a;border-right:none;border-bottom:1.500px solid #6c6c6c"></div>
<div style="left:622px;top:284.7px;width:373px;height:140px;border-top:1px solid #505050;border-left:1px solid #505050"></div>
<div class="t m" style="left:631.5px;top:288.5px;">NONREF</div>
<div class="t m" style="left:631.5px;top:345.7px;">SEPA-CT HABEN EINZELBUCHUNG</div>
<div class="btn2" style="left:621px;top:428.1px;width:92.8px;height:17.8px;"></div>
<div class="t" style="left:641px;top:431.3px;">Untersuchen</div>
<svg style="left:623px;top:429px" width="16" height="15" viewBox="0 0 16 15"><circle cx="6.300" cy="6.300" r="5.600" fill="#fff" stroke="#222" stroke-width="1"/><path d="M6.300 2.600V6.300h3.400" fill="none" stroke="#111" stroke-width="1.100"/><path d="M4.800 9.900l3 2.900L14.300 6.500" fill="none" stroke="#1c4a10" stroke-width="3"/><path d="M4.800 9.900l3 2.900L14.300 6.500" fill="none" stroke="#44b824" stroke-width="1.800"/></svg>
<div class="btn2" style="left:716.3px;top:428.1px;width:23px;height:17.8px;"></div>
<svg style="left:721.5px;top:430px" width="13" height="14" viewBox="0 0 13 14"><path d="M2 3.500h9l-.9 9.500H2.900z" fill="#e2ddd0" stroke="#8a8578" stroke-width=".9"/><path d="M1 3h11M4.500 1.200h4V3h-4z" fill="#d5d0c2" stroke="#8a8578" stroke-width=".9"/><path d="M4.600 5.500v6M6.500 5.500v6M8.400 5.500v6" stroke="#a09a8a" stroke-width=".8"/></svg>
<div class="btn2" style="left:741.6px;top:428.1px;width:23.4px;height:17.8px;"></div>
<svg style="left:745.5px;top:430px" width="15" height="14" viewBox="0 0 15 14"><circle cx="4.500" cy="3.800" r="3" fill="#22c022" stroke="#0a500a" stroke-width=".8"/><circle cx="10" cy="9.800" r="3" fill="#e8202a" stroke="#600" stroke-width=".8"/><path d="M9 1.500c2.500 0 3.500 1.500 3.300 3.800M5.500 12.300c-2.500 0-3.500-1.500-3.300-3.800" fill="none" stroke="#222" stroke-width="1"/><path d="M11 5.300l1.300 1.500 1.300-1.800M3.500 8.800L2.200 7.300.9 9" fill="none" stroke="#222" stroke-width=".9"/></svg>
<svg width="0" height="0" style="left:0;top:0"><defs><linearGradient id="tabA" x1="0" y1="0" x2="0" y2="1"><stop offset="0" stop-color="#a6c0e5"/><stop offset="1" stop-color="#84a7d7"/></linearGradient><linearGradient id="tabI" x1="0" y1="0" x2="0" y2="1"><stop offset="0" stop-color="#d6e2f1"/><stop offset="1" stop-color="#c2d3e9"/></linearGradient></defs></svg>
<div style="left:17px;top:487px;width:978px;height:161px;background:#dfe9f4;border:1px solid #a8bfdc;border-top:3px solid #86a8d6;border-bottom:2px solid #b4c9e2"></div>
<div style="left:18px;top:490px;width:977px;height:1px;background:#b3c9e6"></div>
<svg style="left:396.7px;top:471px" width="90.30000000000001" height="17.5" viewBox="0 0 90.30000000000001 17.5"><path d="M.5 17.0L8.5 2.500Q10.0 .5 12.5 .5H85.80000000000001Q88.30000000000001 .5 88.30000000000001 3V17.0" fill="url(#tabI)" stroke="#a3b9d6" stroke-width="1"/></svg>
<div class="t" style="left:409px;top:474px;">Anlagenliste</div>
<svg style="left:325.7px;top:471px" width="73.0" height="17.5" viewBox="0 0 73.0 17.5"><path d="M.5 17.0L9.800000000000011 2.500Q11.300000000000011 .5 13.800000000000011 .5H68.5Q71.0 .5 71.0 3V17.0" fill="url(#tabI)" stroke="#a3b9d6" stroke-width="1"/></svg>
<div class="t" style="left:338.2px;top:474px;">Protokoll</div>
<svg style="left:242.2px;top:471px" width="85.5" height="17.5" viewBox="0 0 85.5 17.5"><path d="M.5 17.0L9.300000000000011 2.500Q10.800000000000011 .5 13.300000000000011 .5H81.0Q83.5 .5 83.5 3V17.0" fill="url(#tabI)" stroke="#a3b9d6" stroke-width="1"/></svg>
<div class="t" style="left:254.5px;top:474px;">Kontierung</div>
<svg style="left:177.4px;top:471px" width="66.79999999999998" height="17.5" viewBox="0 0 66.79999999999998 17.5"><path d="M.5 17.0L7.299999999999983 2.500Q8.799999999999983 .5 11.299999999999983 .5H62.29999999999998Q64.79999999999998 .5 64.79999999999998 3V17.0" fill="url(#tabI)" stroke="#a3b9d6" stroke-width="1"/></svg>
<div class="t" style="left:189.5px;top:474px;">Akonto</div>
<svg style="left:29px;top:471px" width="66.5" height="17.5" viewBox="0 0 66.5 17.5"><path d="M.5 17.0L12.200000000000003 2.500Q13.700000000000003 .5 16.200000000000003 .5H62.0Q64.5 .5 64.5 3V17.0" fill="url(#tabI)" stroke="#a3b9d6" stroke-width="1"/></svg>
<div class="t" style="left:47.3px;top:474px;">Belege</div>
<svg style="left:85.5px;top:471px" width="93.9" height="17.5" viewBox="0 0 93.9 17.5"><path d="M.5 17.0L11.0 2.500Q12.5 .5 15.0 .5H89.4Q91.9 .5 91.9 3V17.0" fill="url(#tabA)" stroke="#7f9fcb" stroke-width="1"/></svg>
<div class="t" style="left:103.7px;top:474px;">Zuordnung</div>
<div class="btn" style="left:23.8px;top:509.2px;width:201.5px;height:20px;text-align:center;line-height:20px;padding-left:20px">Posten hinzulesen</div>
<svg style="left:25.5px;top:512px" width="14" height="12" viewBox="0 0 14 12"><path d="M.5.500v6l4-3z" fill="#f5a623" stroke="#7a4a00" stroke-width=".7"/><rect x="3.500" y="2.500" width="9.500" height="8.500" fill="#fff" stroke="#444" stroke-width=".9"/><rect x="5.500" y="4.500" width="5.500" height="4.500" fill="#fff" stroke="#2a3fd0" stroke-width=".8"/><path d="M8.250 5.300v3M6.700 6.800h3.100" stroke="#2a3fd0" stroke-width=".9"/></svg>
<div style="left:23.7px;top:530.8px;width:971.3px;height:81.2px;background:#cad9ea;border-top:1px solid #bccbde;border-bottom:1px solid #c2d0e2"></div>
<div class="btn2" style="left:47.6px;top:533.5px;width:21.5px;height:18.3px;"></div>
<svg style="left:53.5px;top:535.5px" width="10" height="14" viewBox="0 0 10 14"><path d="M5 0v4.500M1.300 1l2.700 3M8.700 1L6 4M0 4.700h3.500M10 4.700H6.500M1.300 8.400L4 5.600M8.700 8.400L6 5.600" stroke="#ffec00" stroke-width="1.100"/><rect x="4" y="3.300" width="2" height="3" fill="#f01820"/><rect x="4" y="6.300" width="2" height="7" fill="#c8d4e8" stroke="#6a7a9a" stroke-width=".5"/></svg>
<div class="btn2" style="left:71.4px;top:533.5px;width:22px;height:18.3px;"></div>
<svg style="left:77.5px;top:535.5px" width="10" height="14" viewBox="0 0 10 14"><path d="M1.200 .5l3.300 3.800M8.800 .5L5.500 4.300" stroke="#8a8a8a" stroke-width=".9"/><rect x="4" y="4" width="2" height="2.600" fill="#e01820"/><rect x="4" y="6.600" width="2" height="6.800" fill="#2a2a2a"/></svg>
<div style="left:97.4px;top:536.5px;width:1px;height:13px;background:#b3c2d6"></div>
<div class="btn2" style="left:103.2px;top:533.5px;width:22px;height:18.3px;"></div>
<svg style="left:106.2px;top:535.5px" width="16" height="14" viewBox="0 0 16 14"><path d="M4 .5h8l3.500 3.300v9.700H4z" fill="#fff" stroke="#1a1a1a" stroke-width="1"/><path d="M12 .5v3.300h3.500z" fill="#222"/><path d="M12.500 1.800l1.800 1.600" stroke="#7ad" stroke-width=".8"/><path d="M14.200 4.500v8.500" stroke="#bcd" stroke-width="1"/><path d="M.4 6.900L1.800 2.600 3.500 3.900C5 2.300 7.200 1.900 9 2.700c1.700.7 2.800 2.100 3 3.900H8.900C8.600 5.700 7.900 5.200 7 5.200c-.7 0-1.300.3-1.700.8l1.600 1.300z" fill="#0c0cae" stroke="#00006a" stroke-width=".4"/><path d="M12.100 8.100L10.700 12.400 9 11.100C7.500 12.700 5.300 13.100 3.500 12.300 1.800 11.600.7 10.200.5 8.400H3.600C3.900 9.300 4.600 9.800 5.500 9.800c.7 0 1.300-.3 1.700-.8L5.600 7.700z" fill="#0c0cae" stroke="#00006a" stroke-width=".4"/></svg>
<div class="btn2" style="left:128px;top:533.5px;width:87px;height:18.3px;"></div>
<svg style="left:131px;top:535.5px" width="17" height="14" viewBox="0 0 17 14"><rect x=".6" y=".6" width="12" height="12.500" fill="#fff" stroke="#333" stroke-width="1"/><rect x="1.200" y="1.200" width="10.800" height="2.600" fill="#777"/><path d="M2.500 6.500h8M2.500 8.500h8" stroke="#4a9a2a" stroke-width="1.400" stroke-dasharray="1.500 .7"/><rect x="7" y="9.500" width="9.500" height="3.200" fill="#e0101c" stroke="#600" stroke-width=".5"/></svg>
<div class="t" style="left:148.5px;top:538.3px;letter-spacing:.3px">Entfernen</div>
<svg style="left:208.3px;top:543.8px" width="4" height="4" viewBox="0 0 4 4"><path d="M4 0v4H0z" fill="#333"/></svg>
<div style="left:661.5px;top:555.5px;width:333.5px;height:1px;background:#bdccdf"></div>
<div style="left:661.5px;top:572.5px;width:333.5px;height:1px;background:#bdccdf"></div>
<div style="left:47px;top:556px;width:17.5px;height:17px;background:linear-gradient(#e6e9ee,#dfe2e9 45%,#d2d7e0);border-left:1px solid #f2f4f7;border-right:1px solid #b4bcc8;line-height:18px;color:#1d1d2c;overflow:hidden;padding-left:1.200px;">Z</div>
<div style="left:64.5px;top:556px;width:73.0px;height:17px;background:linear-gradient(#e6e9ee,#dfe2e9 45%,#d2d7e0);border-left:1px solid #f2f4f7;border-right:1px solid #b4bcc8;line-height:18px;color:#1d1d2c;overflow:hidden;padding-left:1.200px;">Konto</div>
<div style="left:137.5px;top:556px;width:91.5px;height:17px;background:linear-gradient(#e6e9ee,#dfe2e9 45%,#d2d7e0);border-left:1px solid #f2f4f7;border-right:1px solid #b4bcc8;line-height:18px;color:#1d1d2c;overflow:hidden;padding-left:1.200px;">Schecknummer</div>
<div style="left:229px;top:556px;width:73px;height:17px;background:linear-gradient(#e6e9ee,#dfe2e9 45%,#d2d7e0);border-left:1px solid #f2f4f7;border-right:1px solid #b4bcc8;line-height:18px;color:#1d1d2c;overflow:hidden;padding-left:1.200px;">Belegnr</div>
<div style="left:302px;top:556px;width:32px;height:17px;background:linear-gradient(#e6e9ee,#dfe2e9 45%,#d2d7e0);border-left:1px solid #f2f4f7;border-right:1px solid #b4bcc8;line-height:18px;color:#1d1d2c;overflow:hidden;letter-spacing:-0.18px;padding-left:1.200px;">BuKr.</div>
<div style="left:334px;top:556px;width:32.5px;height:17px;background:linear-gradient(#e6e9ee,#dfe2e9 45%,#d2d7e0);border-left:1px solid #f2f4f7;border-right:1px solid #b4bcc8;line-height:18px;color:#1d1d2c;overflow:hidden;text-align:right;padding-right:2.500px;">Jahr</div>
<div style="left:366.5px;top:556px;width:72.0px;height:17px;background:linear-gradient(#e6e9ee,#dfe2e9 45%,#d2d7e0);border-left:1px solid #f2f4f7;border-right:1px solid #b4bcc8;line-height:18px;color:#1d1d2c;overflow:hidden;padding-left:1.200px;">Buch.dat.</div>
<div style="left:438.5px;top:556px;width:40.0px;height:17px;background:linear-gradient(#e6e9ee,#dfe2e9 45%,#d2d7e0);border-left:1px solid #f2f4f7;border-right:1px solid #b4bcc8;line-height:18px;color:#1d1d2c;overflow:hidden;padding-left:1.200px;">Währg</div>
<div style="left:478.5px;top:556px;width:91.20000000000005px;height:17px;background:linear-gradient(#e6e9ee,#dfe2e9 45%,#d2d7e0);border-left:1px solid #f2f4f7;border-right:1px solid #b4bcc8;line-height:18px;color:#1d1d2c;overflow:hidden;text-align:right;padding-right:2.500px;">Brutto</div>
<div style="left:569.7px;top:556px;width:91.79999999999995px;height:17px;background:linear-gradient(#e6e9ee,#dfe2e9 45%,#d2d7e0);border-left:1px solid #f2f4f7;border-right:1px solid #b4bcc8;line-height:18px;color:#1d1d2c;overflow:hidden;text-align:right;padding-right:2.500px;">Zugeordnet</div>
<div class="t" style="left:55.5px;top:561.8px;font-size:9px">...</div>
<div style="left:25.6px;top:556px;width:18.5px;height:17px;background:linear-gradient(#f2f4f7,#d9dde5);border:1px solid #aab2be;border-radius:1px"></div>
<svg style="left:28px;top:557.5px" width="15" height="14" viewBox="0 0 15 14"><rect x=".6" y=".6" width="10" height="12" fill="#fff" stroke="#333" stroke-width="1"/><path d="M2 3.500h7M2 6.500h7M2 9.500h7" stroke="#3a8a2a" stroke-width="1.600" stroke-dasharray="1.400 .6"/><path d="M9.500 7.500v6l1.600-1.400 1.200 2.200 1-.5-1.200-2.100h2z" fill="#fff" stroke="#111" stroke-width=".7"/></svg>
<div style="left:25.6px;top:573px;width:18.5px;height:17.5px;background:#dcdfe6;border:1px solid #b8bfca"></div>
<div style="left:47px;top:573px;width:614.5px;height:17.5px;background:#dce6f2;border-bottom:1px solid #eef3f9"></div>
<div style="left:47.5px;top:573px;width:16.5px;height:17px;background:#ffdf80"></div>
<svg style="left:50.5px;top:574.5px" width="10" height="14" viewBox="0 0 10 14"><path d="M5 0v4.500M1.300 1l2.700 3M8.700 1L6 4M0 4.700h3.500M10 4.700H6.500M1.300 8.400L4 5.600M8.700 8.400L6 5.600" stroke="#ffec00" stroke-width="1.100"/><rect x="4" y="3.300" width="2" height="3" fill="#f01820"/><rect x="4" y="6.300" width="2" height="7" fill="#c8d4e8" stroke="#6a7a9a" stroke-width=".5"/></svg>
<div style="left:63.5px;top:573px;width:1px;height:17px;background:#c9d4e3"></div>
<div style="left:136.5px;top:573px;width:1px;height:17px;background:#c9d4e3"></div>
<div style="left:228px;top:573px;width:1px;height:17px;background:#c9d4e3"></div>
<div style="left:301px;top:573px;width:1px;height:17px;background:#c9d4e3"></div>
<div style="left:333px;top:573px;width:1px;height:17px;background:#c9d4e3"></div>
<div style="left:365.5px;top:573px;width:1px;height:17px;background:#c9d4e3"></div>
<div style="left:437.5px;top:573px;width:1px;height:17px;background:#c9d4e3"></div>
<div style="left:477.5px;top:573px;width:1px;height:17px;background:#c9d4e3"></div>
<div style="left:568.7px;top:573px;width:1px;height:17px;background:#c9d4e3"></div>
<div style="left:660.5px;top:573px;width:1px;height:17px;background:#c9d4e3"></div>
<div style="left:570px;top:573px;width:91px;height:16.5px;background:#c3f5b8"></div>
<div style="left:570px;top:589.5px;width:91px;height:1px;background:#fff"></div>
<div class="t" style="left:337px;top:575px;">2014</div>
<div class="t" style="left:369.5px;top:575px;">02.07.2014</div>
<div class="t" style="left:442px;top:575px;">EUR</div>
<div class="t" style="left:478.5px;top:575px;width:83px;text-align:right">1.618,50</div>
<div class="t" style="left:569.7px;top:575px;width:84px;text-align:right">1.600,00</div>
<div class="lbl" style="left:23px;top:614.2px;width:106px;height:17.700px;line-height:19.200px;padding-left:2.500px">Akontobetrag</div>
<div class="fld" style="left:128.7px;top:613px;width:136.5px;height:17.5px;"></div>
<div class="t" style="left:268.5px;top:615.5px;">EUR</div>
<div class="fld" style="left:325.3px;top:613px;width:103px;height:18.5px;padding-left:3px;line-height:17.700px">Haben</div>
<svg style="left:416.5px;top:620px" width="9" height="5" viewBox="0 0 9 5"><path d="M0 0h8.500L4.250 4.500z" fill="#1f3f86"/></svg>
<div class="lbl" style="left:450px;top:614.2px;width:106px;height:17.700px;line-height:19.200px;padding-left:2.500px">Differenzgrund</div>
<div class="fld" style="left:555px;top:613px;width:25px;height:18.5px;"></div>
<div class="btn" style="left:601px;top:612.6px;width:31.5px;height:19.6px;"></div>
<svg style="left:609.5px;top:615px" width="15" height="14" viewBox="0 0 15 14"><rect x="0" y="7" width="10.200" height="6.800" fill="#fffbe8"/><rect x=".6" y="7.600" width="9" height="5.600" fill="#d9bfe0"/><path d="M3.900 3.300h4.600V.5l5.600 4.500-5.600 4.500V6.900H3.900z" fill="#ffee10" stroke="#111" stroke-width="1" stroke-linejoin="round"/></svg>
<div style="left:14px;top:656px;width:299.5px;height:19.5px;background:#fff;border:1px solid #dde3ec;border-radius:3px"></div>
<svg style="left:19px;top:659.6px" width="13" height="13" viewBox="0 0 14 14"><path d="M4.200.600h5.600l3.600 3.600v5.600l-3.600 3.600H4.200L.6 9.800V4.200z" fill="#cc202c" stroke="#801018" stroke-width=".9"/><path d="M7 2.800v5.200" stroke="#fff" stroke-width="2.200"/><circle cx="7" cy="10.600" r="1.300" fill="#fff"/></svg>
<div class="t" style="left:36.8px;top:660.3px;">Das Feld Text benötigt für die Buchung eine Eingabe</div>
<svg style="left:622px;top:658px" width="37" height="18" viewBox="0 0 37 18"><defs><linearGradient id="sapg" x1="0" y1="0" x2="0" y2="1"><stop offset="0" stop-color="#cddcf0"/><stop offset="1" stop-color="#a2b7d7"/></linearGradient></defs><path d="M0 0h36.500L19 17.600H0z" fill="url(#sapg)"/><text x="1" y="14" font-family="Liberation Sans, sans-serif" font-weight="bold" font-size="14.500" fill="#fff" letter-spacing="-1.300">SAP</text></svg>
<div class="blue" style="left:128px;top:175px;width:148.5px;height:73.2px;"></div>
<div class="blue" style="left:741px;top:176px;width:149px;height:72.7px;"></div>
<div class="blue" style="left:120.6px;top:303.9px;width:225.3px;height:36px;border-radius:7px"></div>
<div class="blue" style="left:627.3px;top:302.9px;width:148.5px;height:43.7px;border-radius:8px"></div>
<div class="blue" style="left:64.1px;top:569.3px;width:270.8px;height:30.3px;border-radius:6px"></div>
</body></html>
